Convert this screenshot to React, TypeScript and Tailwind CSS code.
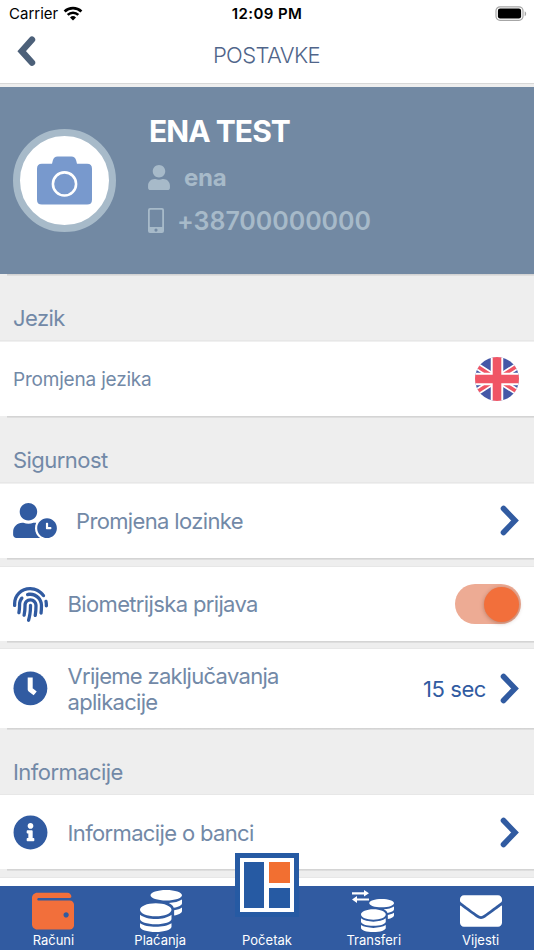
import type { ReactNode } from "react";
import {
  FaCoins,
  FaEnvelope,
  FaFingerprint,
  FaInfoCircle,
  FaUser,
  FaUserClock,
  FaWallet,
} from "react-icons/fa";

function Chevron() {
  return (
    <svg className="h-[31px] w-[19px] shrink-0 text-[#315ba1]" viewBox="0 0 19 31" fill="none">
      <path
        d="M3.5 3.5 15 15.5 3.5 27.5"
        stroke="currentColor"
        strokeWidth="5.6"
        strokeLinecap="round"
        strokeLinejoin="miter"
      />
    </svg>
  );
}

function ClockIcon() {
  return (
    <svg className="size-[35px] shrink-0" viewBox="0 0 35 35" fill="none">
      <circle cx="17.4" cy="17.3" r="16.9" fill="#315ba1" />
      <path d="M17.2 6.4v12.1l5 3.900" stroke="#fff" strokeWidth="5" strokeLinejoin="round" />
    </svg>
  );
}

function StatusBar() {
  return (
    <div className="grid h-7 grid-cols-3 items-center pl-[9px] pr-[9px] text-black">
      <div className="flex items-center gap-[5px]">
        <span className="text-[15px] leading-7 tracking-[0]">Carrier</span>
        <svg className="-mt-px h-[15px] w-5" viewBox="0 0 20 15">
          <path d="M1.6 5.5a12.1 12.1 0 0 1 16.8 0" fill="none" stroke="currentColor" strokeWidth="2.7" />
          <path d="M4.7 8.9a7.6 7.6 0 0 1 10.6 0" fill="none" stroke="currentColor" strokeWidth="2.6" />
          <path d="M7 11.4a4.4 4.4 0 0 1 6 0L10 14.6Z" fill="currentColor" />
        </svg>
      </div>
      <div className="text-center text-[15px] font-semibold leading-7 tracking-[0.4px]">12:09 PM</div>
      <svg className="-mr-[2px] h-4 w-8 justify-self-end" viewBox="0 0 32 16">
        <rect x="1" y="0.8" width="27" height="13.5" rx="4" fill="none" stroke="#a6a6a6" strokeWidth="1.2" />
        <rect x="2.9" y="2.6" width="23.2" height="9.8" rx="2.2" fill="#000" />
        <path d="M29.7 5.2c2 1 2 4 0 5Z" fill="#a6a6a6" />
      </svg>
    </div>
  );
}

function Header() {
  return (
    <header className="grid h-[55px] grid-cols-[60px_1fr_60px]">
      <svg className="ml-[17px] mt-2 h-[31px] w-[19px] text-[#4c6079]" viewBox="0 0 19 31" fill="none">
        <path d="M15 3.7 4.7 15.2 15 26.7" stroke="currentColor" strokeWidth="6.4" strokeLinecap="round" />
      </svg>
      <h1 className="pr-px pt-[13px] text-center text-[22px] font-light leading-7 tracking-[-0.6px] text-[#50658a]">
        POSTAVKE
      </h1>
    </header>
  );
}

function Profile() {
  return (
    <section className="flex h-[187px] items-center bg-[#7289a3] pl-[13px]">
      <div className="flex size-[103px] shrink-0 items-center justify-center rounded-full border-[7px] border-[#a7bac9] bg-white">
        <svg className="h-[49px] w-[55px]" viewBox="0 0 56 49">
          <path
            d="M5 7.5h10.300l.8-3.300Q17.200 0 21 0h14Q38.800 0 39.900 4.200L40.700 7.500H51q5 0 5 5V44q0 5-5 5H5q-5 0-5-5V12.500q0-5 5-5Z"
            fill="#7899cd"
          />
          <circle cx="28" cy="28" r="11.800" fill="none" stroke="#fff" strokeWidth="2.600" />
        </svg>
      </div>
      <div className="mb-[7px] ml-8 text-[#a7bac9]">
        <div className="pl-px text-[30px] font-bold leading-9 tracking-[-0.95px] text-white">ENA TEST</div>
        <div className="mt-[7px] flex h-[43px] items-center gap-[14px]">
          <FaUser className="h-[25px] w-[22px]" />
          <span className="pt-px text-2xl font-bold tracking-[-0.300px]">ena</span>
        </div>
        <div className="flex h-[43px] items-center gap-[13px]">
          <svg className="h-[25px] w-4" viewBox="0 0 16 25">
            <path
              fill="currentColor"
              fillRule="evenodd"
              d="M2 0h12q2 0 2 2v21q0 2-2 2H2q-2 0-2-2V2Q0 0 2 0Zm.5 1.700q-.7 0-.7.700v16q0 .700.700.700h11q.700 0 .700-.700v-16q0-.700-.700-.700ZM8 20.500a1.600 1.600 0 1 0 0 3.200 1.600 1.600 0 0 0 0-3.200Z"
            />
          </svg>
          <span className="pt-px text-[25px] font-semibold leading-8 tracking-[-0.05px]">+38700000000</span>
        </div>
      </div>
    </section>
  );
}

// Thin inset shadow line below a row
function Edge() {
  return <div className="ml-[7px] h-[2px] shrink-0 bg-linear-to-b from-[#cfcfcf] to-[#e3e3e3]" />;
}

function SectionTitle({ children }: { children: ReactNode }) {
  return (
    <div className="h-[67px] shrink-0 border-b border-[#e7e7e7]">
      <Edge />
      <h2 className="pl-[13px] pt-[28px] text-[22px] leading-7 tracking-[-0.55px] text-[#7289a7]">{children}</h2>
    </div>
  );
}

function Gap() {
  return (
    <div className="h-[9px] shrink-0 border-b border-[#e7e7e7]">
      <Edge />
    </div>
  );
}

function Flag() {
  return (
    <svg className="size-11" viewBox="0 0 44 44">
      <clipPath id="disc">
        <circle cx="22" cy="22" r="22" />
      </clipPath>
      <g clipPath="url(#disc)">
        <path fill="#4558a7" d="M0 0h44v44H0z" />
        <path d="M-6 4 50 40M50 4-6 40" stroke="#fff" strokeWidth="6.800" />
        <path d="M-6 4 50 40M50 4-6 40" stroke="#f05565" strokeWidth="3.600" />
        <path d="M22 0v44M0 22h44" stroke="#fff" strokeWidth="12.500" />
        <path d="M22 0v44M0 22h44" stroke="#f05565" strokeWidth="8.600" />
      </g>
    </svg>
  );
}

function NavItem({ label, children }: { label: string; children?: ReactNode }) {
  return (
    <div className="relative flex flex-col items-center pt-1 text-white">
      <div className="flex h-[42px] items-center">{children}</div>
      <span className="text-[13px] leading-4">{label}</span>
    </div>
  );
}

const row =
  "flex shrink-0 items-center bg-white pl-[13px] pr-[15px] text-[22px] leading-[26px] tracking-[-0.64px] text-[#7289a7]";

export default function App() {
  return (
    <div className="flex h-[950px] w-[534px] flex-col overflow-hidden bg-[#eeeeee] font-['Inter',sans-serif]">
      <div className="shrink-0 bg-white">
        <StatusBar />
        <Header />
      </div>
      <div className="h-1 shrink-0 border-t border-[#d8d8d8] bg-[#eeeeee]" />
      <Profile />
      <main className="flex min-h-0 flex-1 flex-col overflow-hidden">
        <SectionTitle>Jezik</SectionTitle>
        <div className={`${row} h-[75px] border-t border-[#f0f0f0]`}>
          <span className="flex-1 pt-px text-[19px] tracking-[-0.2px]">Promjena jezika</span>
          <Flag />
        </div>
        <SectionTitle>Sigurnost</SectionTitle>
        <div className={`${row} h-[75px] border-t border-[#f0f0f0] pb-px`}>
          <FaUserClock className="h-[35px] w-11 text-[#315ba1]" />
          <span className="ml-[19px] flex-1 pt-px">Promjena lozinke</span>
          <Chevron />
        </div>
        <Gap />
        <div className={`${row} h-[74px]`}>
          <FaFingerprint className="size-[35px] text-[#315ba1]" />
          <span className="ml-[19.5px] flex-1">Biometrijska prijava</span>
          <div className="-mr-0.5 flex h-10 w-[66px] items-center justify-end rounded-full bg-[#edab94] pr-[2px]">
            <div className="size-[35px] rounded-full bg-[#f26f3b] shadow-[0_1px_4px_rgba(90,40,20,0.35)]" />
          </div>
        </div>
        <div className="h-2 shrink-0 border-b border-[#e7e7e7]">
          <Edge />
        </div>
        <div className={`${row} h-[79px]`}>
          <ClockIcon />
          <span className="ml-[19.5px] flex-1 tracking-[-0.7px]">
            Vrijeme zaključavanja
            <br />
            aplikacije
          </span>
          <span className="mr-[14px] tracking-[-0.4px] text-[#315ba1]">15 sec</span>
          <Chevron />
        </div>
        <SectionTitle>Informacije</SectionTitle>
        <div className={`${row} h-[74px]`}>
          <FaInfoCircle className="size-[35px] text-[#315ba1]" />
          <span className="ml-[19.5px] flex-1 pt-px">Informacije o banci</span>
          <Chevron />
        </div>
        <Gap />
        <div className="flex-1 bg-white" />
      </main>
      <nav className="grid h-16 shrink-0 grid-cols-5 bg-[#315ba1]">
        <NavItem label="Računi">
          <FaWallet className="size-[42px] text-[#f26f3b]" />
        </NavItem>
        <NavItem label="Plaćanja">
          <FaCoins className="ml-px size-[42px]" />
        </NavItem>
        <NavItem label="Početak">
          <div className="absolute -top-[33px] left-[21.4px] size-16 bg-[#265aa3] p-[5px]">
            <div className="grid size-[54px] grid-cols-2 grid-rows-2 gap-[5px] bg-white p-1">
              <div className="row-span-2 bg-[#265aa3]" />
              <div className="bg-[#f26f31]" />
              <div className="bg-[#265aa3]" />
            </div>
          </div>
        </NavItem>
        <NavItem label="Transferi">
          <div className="relative h-[42px] w-[42px]">
            <svg className="absolute -left-px top-0 h-[13px] w-[17px]" viewBox="0 0 17 13">
              <path
                fill="currentColor"
                d="M0 2.200h12V0l5 3.300-5 3.300V4.400H0ZM17 8.400H5V6L0 9.500 5 13v-2.400h12Z"
              />
            </svg>
            <FaCoins className="ml-[8px] mt-[9px] size-[33px]" />
          </div>
        </NavItem>
        <NavItem label="Vijesti">
          <FaEnvelope className="size-[42px]" />
        </NavItem>
      </nav>
    </div>
  );
}
